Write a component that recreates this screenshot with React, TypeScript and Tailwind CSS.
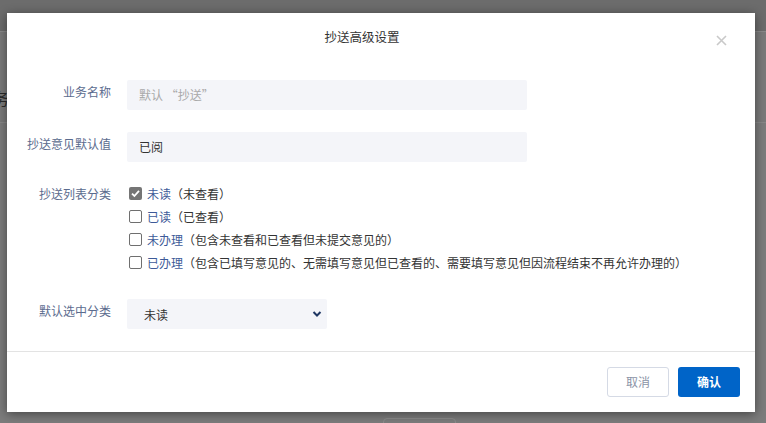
import React from "react";

const font = { fontFamily: '"Noto Sans CJK SC", "Noto Sans", sans-serif' };

function Checkbox({ checked }: { checked?: boolean }) {
  return checked ? (
    <span className="ml-[2px] mr-[5px] flex h-[13px] w-[13px] items-center justify-center rounded-[2px] bg-[#757575]">
      <svg width="11" height="11" viewBox="0 0 11 11">
        <path d="M2 5.6 L4.4 8 L9 2.8" stroke="#fff" strokeWidth="1.8" fill="none" />
      </svg>
    </span>
  ) : (
    <span className="ml-[2px] mr-[5px] h-[13px] w-[13px] rounded-[2px] border border-[#6f6f6f] bg-white" />
  );
}

function CheckRow({ name, desc, checked }: { name: string; desc: string; checked?: boolean }) {
  return (
    <div className="flex h-[23px] items-center">
      <Checkbox checked={checked} />
      <span className="text-[12px] text-[#3d5a98]">{name}</span>
      <span className="text-[12px] text-[#333]">{desc}</span>
    </div>
  );
}

export default function App() {
  return (
    <div className="relative h-[423px] w-[766px] overflow-hidden bg-[#7c7c7c]" style={font}>
      {/* background page under overlay */}
      <div className="h-[32px] border-b border-[#8a8a8a] bg-[#6c6c6c]" />
      <div className="flex h-[91px] items-start border-b border-[#888] bg-[#7a7a7a] pt-[57px]">
        <span className="-ml-[7px] text-[16px] leading-[18px] text-[#2a2a2a]">务</span>
      </div>
      <div className="absolute left-[383px] top-[418px] h-[10px] w-[73px] rounded-t-[4px] border border-[#8c8c8c]" />

      {/* modal */}
      <div className="absolute left-[7px] top-[13px] flex h-[399px] w-[748px] flex-col bg-white shadow-[0_2px_10px_rgba(0,0,0,0.45)]">
        <div className="relative flex h-[48px] items-center justify-center pr-[38px]">
          <span className="text-[12.5px] text-[#333]">抄送高级设置</span>
          <svg className="absolute left-[709px] top-[22px]" width="11" height="11" viewBox="0 0 11 11">
            <path d="M1 1 L10 10 M10 1 L1 10" stroke="#c9c9c9" strokeWidth="1.6" />
          </svg>
        </div>

        <div className="flex flex-1 flex-col pt-[19px]">
          <div className="flex gap-[16px]">
            <div className="w-[104px] text-right text-[12px] leading-[24px] text-[#5b6b8e]">业务名称</div>
            <div className="flex h-[30px] w-[400px] items-center rounded-[2px] bg-[#f4f5f9] pl-[12px] text-[12px] text-[#a9a9a9]">
              默认 “抄送”
            </div>
          </div>

          <div className="mt-[22px] flex gap-[16px]">
            <div className="w-[104px] text-right text-[12px] leading-[24px] text-[#5b6b8e]">抄送意见默认值</div>
            <div className="flex h-[30px] w-[400px] items-center rounded-[2px] bg-[#f4f5f9] pl-[12px] text-[12px] text-[#333]">
              已阅
            </div>
          </div>

          <div className="mt-[20px] flex gap-[16px]">
            <div className="w-[104px] text-right text-[12px] leading-[24px] text-[#5b6b8e]">抄送列表分类</div>
            <div className="flex flex-col">
              <CheckRow checked name="未读" desc="（未查看）" />
              <CheckRow name="已读" desc="（已查看）" />
              <CheckRow name="未办理" desc="（包含未查看和已查看但未提交意见的）" />
              <CheckRow name="已办理" desc="（包含已填写意见的、无需填写意见但已查看的、需要填写意见但因流程结束不再允许办理的）" />
            </div>
          </div>

          <div className="mt-[25px] flex gap-[16px]">
            <div className="w-[104px] text-right text-[12px] leading-[24px] text-[#5b6b8e]">默认选中分类</div>
            <div className="flex h-[30px] w-[200px] items-center justify-between rounded-[2px] bg-[#f4f5f9] pl-[17px] pr-[5px] text-[12px] text-[#333]">
              <span className="mt-[2px]">未读</span>
              <svg width="10" height="8" viewBox="0 0 10 8">
                <path d="M1.5 2 L5 5.5 L8.5 2" stroke="#1f3763" strokeWidth="2" fill="none" />
              </svg>
            </div>
          </div>
        </div>

        <div className="flex h-[61px] items-center justify-end gap-[9px] border-t border-[#e3e3e3] pr-[15px]">
          <div className="flex h-[30px] w-[62px] items-center justify-center rounded-[3px] border border-[#d5dae5] text-[12px] text-[#8a93a6]">
            取消
          </div>
          <div className="flex h-[30px] w-[62px] items-center justify-center rounded-[3px] bg-[#0064c8] text-[12px] font-bold text-white">
            确认
          </div>
        </div>
      </div>
    </div>
  );
}
